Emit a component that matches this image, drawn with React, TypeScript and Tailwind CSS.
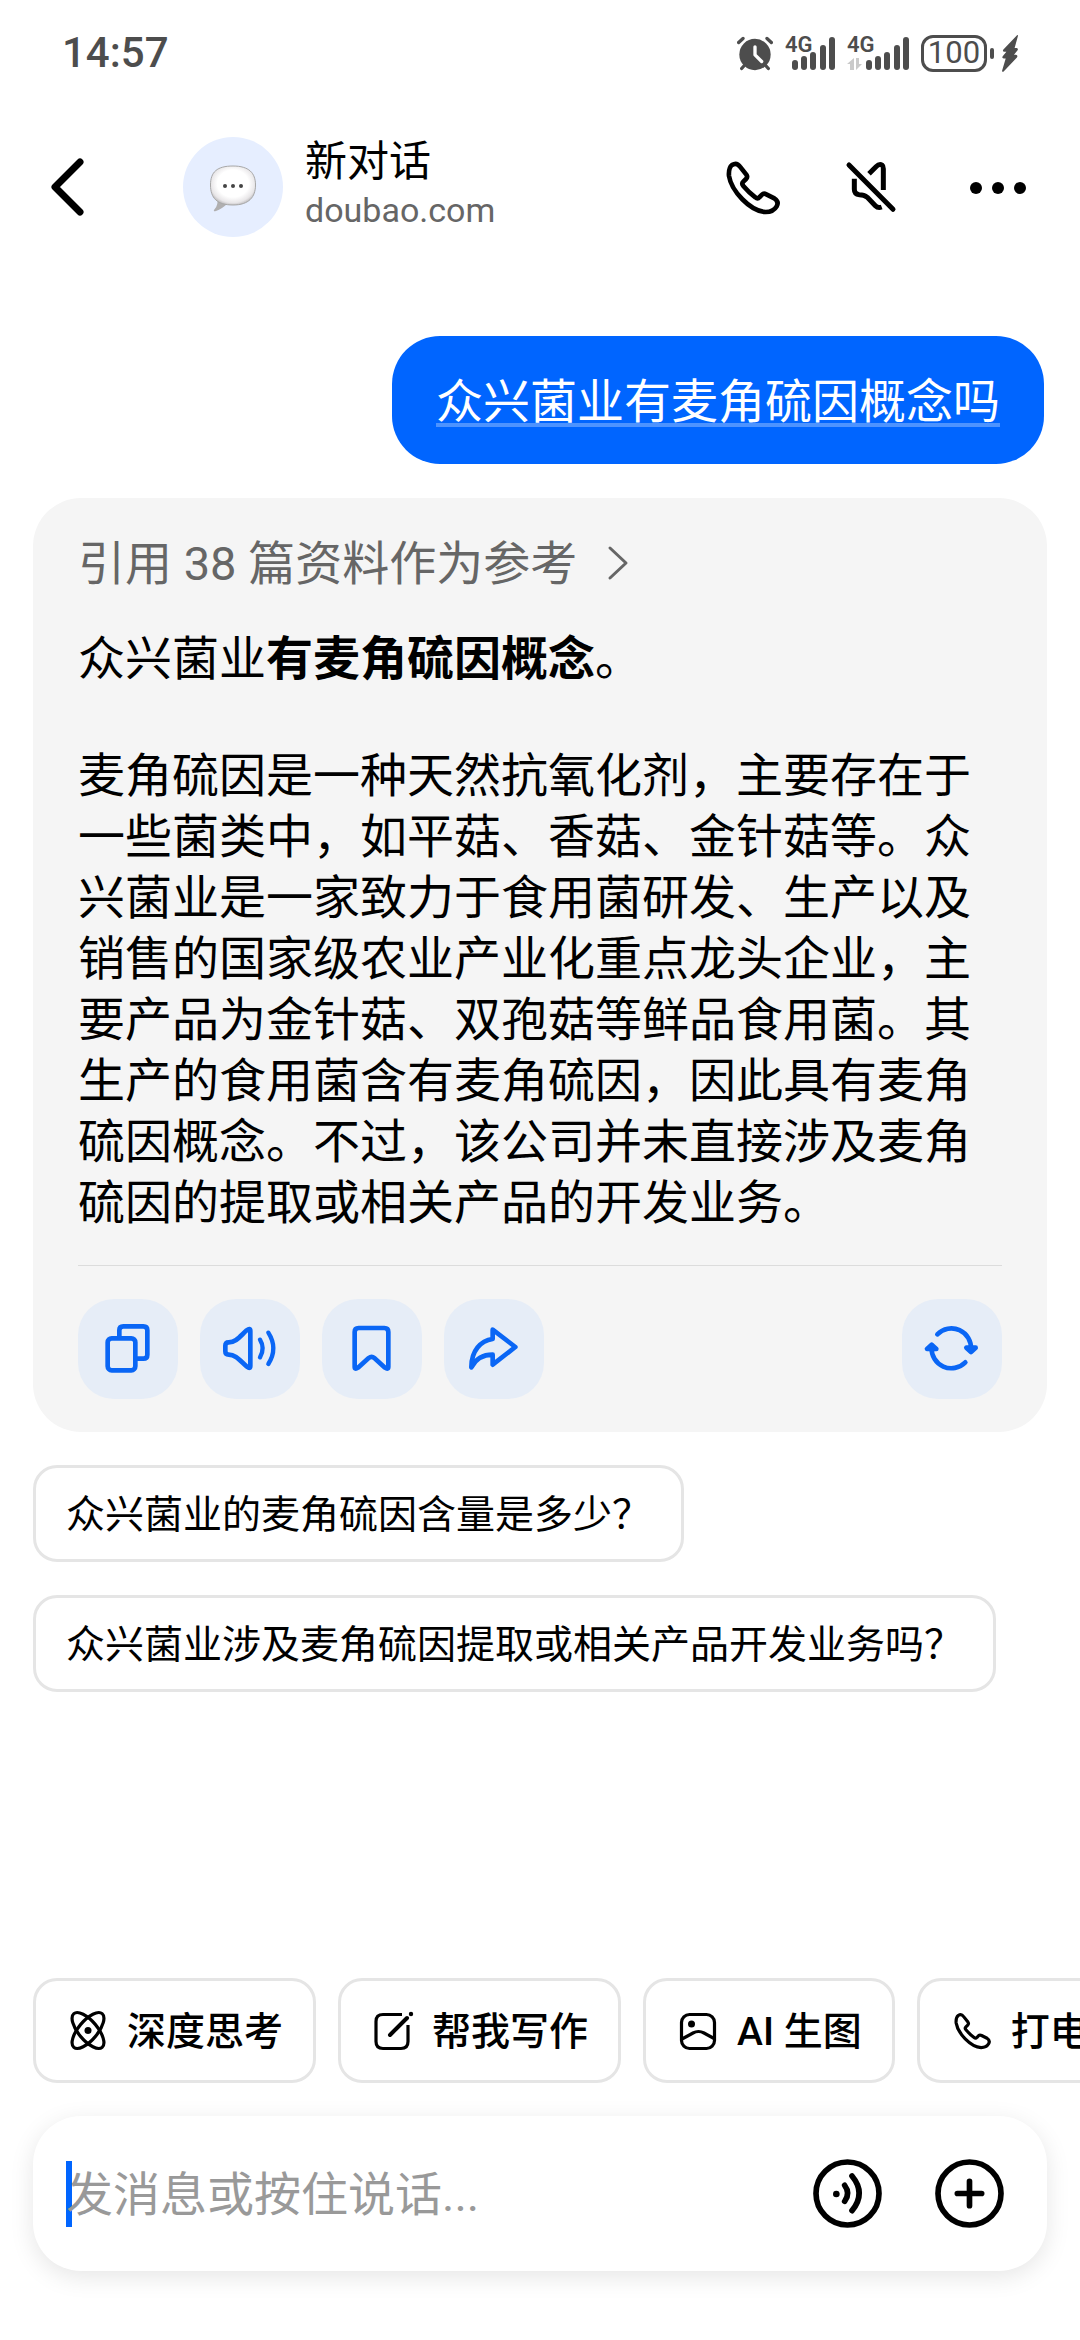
import type { ReactNode } from 'react';

const FOLLOW_UPS = ['众兴菌业的麦角硫因含量是多少？', '众兴菌业涉及麦角硫因提取或相关产品开发业务吗？'];

const BARS = [
  { x: 0, h: 10 },
  { x: 9, h: 14 },
  { x: 18, h: 18 },
  { x: 28, h: 25 },
  { x: 37, h: 33 },
];

function Signal({ data = false }: { data?: boolean }) {
  return (
    <div className={data ? 'relative w-[62px] h-9' : 'relative w-[50px] h-9'}>
      <span className="absolute left-0 top-0 text-[22px] leading-5 font-semibold">4G</span>
      <svg viewBox="0 0 43 34" className="absolute right-0 bottom-px w-[43px] h-[34px]" fill="currentColor">
        {BARS.map((b) => (
          <rect key={b.x} x={b.x} y={34 - b.h} width="6" height={b.h} rx="3" />
        ))}
      </svg>
      {data && (
        <svg viewBox="0 0 15 12" className="absolute left-0 bottom-px w-[15px] h-3" fill="#cacaca">
          <path d="M7 12V0L0 6h3v6zM9 0v12l6-6h-3V0z" />
        </svg>
      )}
    </div>
  );
}

function StatusBar() {
  return (
    <div className="flex items-center justify-between px-[62px] py-8 text-[#4d4d4d]">
      <span className="text-[42px] leading-[42px] font-medium">14:57</span>
      <div className="flex items-center">
        <svg viewBox="0 0 108 104" className="w-9 h-[35px] mr-3" fill="currentColor">
          <circle cx="54" cy="55" r="47" />
          <path d="M22 88l-8 9M86 88l8 9M5 19L18 7M103 19L90 7" stroke="currentColor" strokeWidth="10" strokeLinecap="round" />
          <path d="M54 32v24l20 20" fill="none" stroke="#fff" strokeWidth="10" strokeLinecap="round" strokeLinejoin="round" />
        </svg>
        <Signal />
        <div className="w-3" />
        <Signal data />
        <div className="flex items-center justify-center ml-3 w-[66px] h-[37px] rounded-xl border-[3px] border-[#4d4d4d] text-[31px] leading-8">
          100
        </div>
        <div className="ml-[3px] w-1 h-[11px] rounded-sm bg-[#4d4d4d]" />
        <svg viewBox="0 0 48 112" className="ml-2 w-4 h-[37px]" fill="currentColor">
          <path d="M46 0L4 44q-4 6 3 7h6L2 64q-4 6 3 7h6L0 108q0 5 4 3L45 68q4-6-3-8h-6l11-14q3-6-3-7h-6L48 3q0-4-2-3z" />
        </svg>
      </div>
    </div>
  );
}

function PhoneIcon({ className }: { className: string }) {
  return (
    <svg viewBox="0 0 198 198" className={className} fill="none" stroke="currentColor" strokeWidth="14" strokeLinejoin="round">
      <path d="M36 33Q50 24 60 38L79 62Q84 69 78 75L70 83Q64 89 70 96Q86 115 106 130Q113 136 119 129L126 122Q131 117 139 121L163 133Q178 143 170 157Q160 174 137 174C90 172 34 110 27 66Q25 42 36 33Z" />
    </svg>
  );
}

function Header() {
  return (
    <header className="flex items-center pt-[31px] pl-[33px] pr-[50px]">
      <button aria-label="返回" className="mr-[84px]">
        <svg viewBox="0 0 66 66" className="size-[66px]" fill="none" stroke="#000" strokeWidth="7" strokeLinecap="round" strokeLinejoin="round">
          <path d="M47 8L22 33l25 25" />
        </svg>
      </button>
      <svg viewBox="0 0 100 100" className="size-[100px] shrink-0">
        <defs>
          <radialGradient id="bubble" cx="50%" cy="45%" r="58%">
            <stop offset="0.6" stopColor="#fff" />
            <stop offset="0.85" stopColor="#e8e6e8" />
            <stop offset="1" stopColor="#b5b3b5" />
          </radialGradient>
        </defs>
        <circle cx="50" cy="50" r="50" fill="#e6eeff" />
        <path d="M34 60q2 8-3 13q-1 2 2 1q6-2 12-8z" fill="#b0afb0" />
        <path d="M50 29C66 29 72.500 36 72.500 48S66 68 50 68S27.500 61 27.500 48S34 29 50 29Z" fill="url(#bubble)" stroke="#a8a8a8" strokeWidth="1" />
        <g fill="#444">
          <circle cx="42" cy="49" r="2" />
          <circle cx="50" cy="49" r="2" />
          <circle cx="58" cy="49" r="2" />
        </g>
      </svg>
      <div className="ml-[22px] pb-[2px] grow">
        <h1 className="text-[42px] leading-[49px] font-normal">新对话</h1>
        <p className="text-[34px] leading-[49px] text-[#666]">doubao.com</p>
      </div>
      <div className="flex items-center gap-14">
        <button aria-label="语音通话">
          <PhoneIcon className="size-[66px]" />
        </button>
        <button aria-label="静音">
          <svg viewBox="0 0 198 198" className="size-[66px]" fill="none" stroke="currentColor" strokeWidth="15">
            <path d="M21 33L153 166" strokeLinecap="round" />
            <path d="M81 59L102 38Q112 28 120 33Q124 36 124 44V108M37 74V106Q37 121 52 122Q66 122 76 130L100 155Q108 163 119 159" />
          </svg>
        </button>
        <button aria-label="更多">
          <svg viewBox="0 0 66 66" className="size-[66px]" fill="currentColor">
            <circle cx="12" cy="34" r="6" />
            <circle cx="34" cy="34" r="6" />
            <circle cx="56" cy="34" r="6" />
          </svg>
        </button>
      </div>
    </header>
  );
}

function ActionButton({ label, children }: { label: string; children: ReactNode }) {
  return (
    <button aria-label={label} className="size-[100px] rounded-[36px] bg-[#e6edf7] text-[#0a66f5]">
      <svg viewBox="0 0 300 300" className="size-full" fill="none" stroke="currentColor" strokeWidth="14" strokeLinecap="round" strokeLinejoin="round">
        {children}
      </svg>
    </button>
  );
}

function Answer() {
  return (
    <article className="mx-[33px] mt-[34px] px-[45px] pt-[35px] pb-[33px] rounded-[48px] bg-[#f5f5f5] text-[47px] leading-[61px]">
      <a href="#refs" className="flex items-center text-[#666]">
        引用 38 篇资料作为参考
        <svg viewBox="0 0 24 40" className="ml-[29px] w-6 h-10" fill="none" stroke="currentColor" strokeWidth="3" strokeLinecap="round" strokeLinejoin="round">
          <path d="M4 4l16 15L4 34" />
        </svg>
      </a>
      <p className="mt-[34px]">
        众兴菌业<strong className="font-bold">有麦角硫因概念</strong>。
      </p>
      <p className="mt-14">
        麦角硫因是一种天然抗氧化剂，主要存在于一些菌类中，如平菇、香菇、金针菇等。众兴菌业是一家致力于食用菌研发、生产以及销售的国家级农业产业化重点龙头企业，主要产品为金针菇、双孢菇等鲜品食用菌。其生产的食用菌含有麦角硫因，因此具有麦角硫因概念。不过，该公司并未直接涉及麦角硫因的提取或相关产品的开发业务。
      </p>
      <div className="flex gap-[22px] mt-8 pt-[33px] border-t border-[#dcdcdc]">
        <ActionButton label="复制">
          <rect x="89" y="118" width="83" height="96" rx="12" />
          <path d="M124 112V94Q124 82 136 82H196Q208 82 208 94V167Q208 179 196 179H179" />
        </ActionButton>
        <ActionButton label="朗读">
          <path d="M76 140Q76 130 86 130C108 130 120 112 140 94Q151 86 151 96V201Q151 211 141 203C120 185 108 167 86 167Q76 167 76 157Z" />
          <path d="M180 122Q196 148 180 175M205 101Q235 148 205 195" strokeWidth="13" />
        </ActionButton>
        <ActionButton label="收藏">
          <path d="M98 99Q98 87 110 87H187Q199 87 199 99V203Q199 213 189 206L157 177Q149 170 140 177L108 206Q98 213 98 203Z" />
        </ActionButton>
        <ActionButton label="分享">
          <path d="M146 92L214 144L146 197V167C115 167 95 180 82 205C82 155 110 125 146 120Z" />
        </ActionButton>
        <div className="flex grow justify-end">
          <ActionButton label="重新生成">
            <path d="M106 106A59 59 0 0 1 207 152M190 190A59 59 0 0 1 89 145" />
            <path d="M193 146h28l-14 13zM75 150h28l-14-13z" fill="currentColor" />
          </ActionButton>
        </div>
      </div>
    </article>
  );
}

function ToolButton({ icon, label }: { icon: ReactNode; label: string }) {
  return (
    <button className="flex items-center gap-4 shrink-0 px-[30px] py-[22px] rounded-[24px] border-[3px] border-[#e5e5e5] whitespace-nowrap">
      {icon}
      <span className="pt-1 text-[39px] leading-[51px] font-medium">{label}</span>
    </button>
  );
}

function Toolbar() {
  return (
    <div className="flex gap-[22px] pl-[33px] overflow-hidden">
      <ToolButton
        label="深度思考"
        icon={
          <svg viewBox="0 0 45 45" className="size-[45px]" fill="none" stroke="currentColor" strokeWidth="3.200">
            <ellipse cx="22" cy="22.500" rx="22" ry="9.500" transform="rotate(50 22 22.500)" />
            <ellipse cx="22" cy="22.500" rx="22" ry="9.500" transform="rotate(-50 22 22.500)" />
            <circle cx="22" cy="22.500" r="3.500" fill="currentColor" stroke="none" />
          </svg>
        }
      />
      <ToolButton
        label="帮我写作"
        icon={
          <svg viewBox="0 0 45 45" className="size-[45px]" fill="none" stroke="currentColor" strokeWidth="3.200">
            <path d="M31 6.500H12Q5 6.500 5 13.500V33.500Q5 40.500 12 40.500H30Q37 40.500 37 33.500V17" />
            <path d="M36 10L19 27" strokeWidth="4" strokeLinecap="round" />
            <circle cx="40" cy="6" r="2.200" fill="currentColor" stroke="none" />
          </svg>
        }
      />
      <ToolButton
        label="AI 生图"
        icon={
          <svg viewBox="0 0 45 45" className="size-[45px]" fill="none" stroke="currentColor" strokeWidth="3.200">
            <rect x="5.500" y="6.500" width="33" height="34" rx="8" />
            <path d="M6 31L17 25Q22.500 22 28 25L39 31" />
            <circle cx="15.500" cy="16" r="3.500" fill="currentColor" stroke="none" />
          </svg>
        }
      />
      <ToolButton label="打电话" icon={<PhoneIcon className="size-[45px]" />} />
    </div>
  );
}

function Composer() {
  return (
    <div className="flex items-center mx-[33px] mt-[33px] mb-[69px] pl-[33px] pr-[43px] py-[43px] rounded-[48px] bg-white shadow-[0_6px_24px_rgba(0,0,0,0.1)]">
      <div className="relative flex grow">
        <span className="absolute left-0 top-[2px] w-[6px] h-[66px] bg-[#0065ff]" />
        <input
          type="text"
          aria-label="发消息"
          placeholder="发消息或按住说话..."
          className="relative w-full h-[69px] pt-[2px] bg-transparent outline-none text-[47px] leading-[61px] placeholder:text-[#999]"
        />
      </div>
      <div className="flex gap-[53px] shrink-0">
        <button aria-label="语音输入">
          <svg viewBox="0 0 207 207" className="size-[69px]" fill="none" stroke="currentColor" strokeWidth="17" strokeLinecap="round">
            <circle cx="103.500" cy="103.500" r="94.500" />
            <circle cx="70" cy="105" r="10" fill="currentColor" stroke="none" />
            <path d="M95 79Q113 103 95 127M117 51Q160 103 117 155" />
          </svg>
        </button>
        <button aria-label="添加">
          <svg viewBox="0 0 207 207" className="size-[69px]" fill="none" stroke="currentColor" strokeWidth="17" strokeLinecap="round">
            <circle cx="103.500" cy="103.500" r="94.500" />
            <path d="M103.500 67v73M67 103.500h73" />
          </svg>
        </button>
      </div>
    </div>
  );
}

export default function App() {
  return (
    <div className="flex flex-col min-h-screen bg-white text-black font-[Roboto,'Noto_Sans_CJK_SC',sans-serif]">
      <StatusBar />
      <Header />
      <main className="flex flex-col pt-[99px] grow">
        <p className="self-end mr-9 px-11 pt-[35px] pb-8 rounded-[48px] bg-[#0065ff] text-white text-[47px] leading-[61px]">
          <span className="underline decoration-4 decoration-white/30 underline-offset-[5px] [text-decoration-skip-ink:none]">
            众兴菌业有麦角硫因概念吗
          </span>
        </p>
        <Answer />
        <div className="flex flex-col items-start gap-[33px] mx-[33px] mt-[33px]">
          {FOLLOW_UPS.map((q) => (
            <button key={q} className="px-[30px] pt-5 pb-4 rounded-[24px] border-[3px] border-[#e5e5e5] text-[39px] leading-[55px] text-left">
              {q}
            </button>
          ))}
        </div>
      </main>
      <footer>
        <Toolbar />
        <Composer />
      </footer>
    </div>
  );
}
